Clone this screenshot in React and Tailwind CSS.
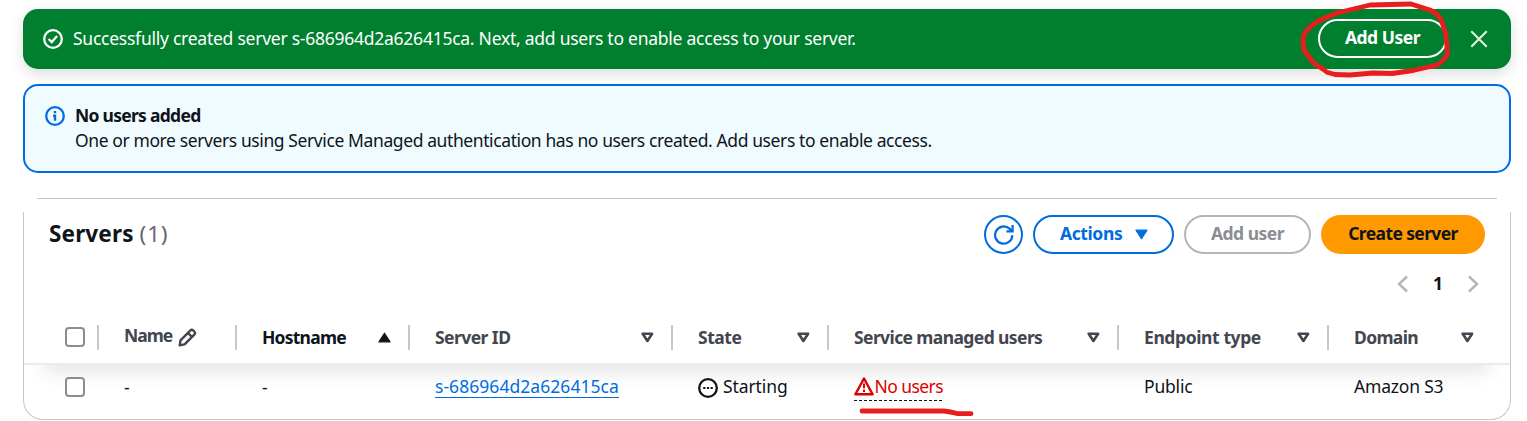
import React from "react";

const FilledCaret = ({ className, up }) => (
  <svg viewBox="0 0 13 11" className={`h-[11px] w-[13px] shrink-0 ${className}`}>
    <path d={up ? "M6.5 1.2 12 9.8H1z" : "M6.5 9.8 12 1.2H1z"} fill="currentColor" stroke="currentColor" strokeWidth="1.2" strokeLinejoin="round" />
  </svg>
);

const HollowCaret = () => (
  <svg viewBox="0 0 13 11" className="h-[11px] w-[13px] shrink-0 text-[#424650]">
    <path d="M1.7 1.7h9.4L6.4 9z" fill="none" stroke="currentColor" strokeWidth="2.6" strokeLinejoin="round" />
  </svg>
);

const Checkbox = () => <span className="block h-5 w-5 shrink-0 rounded-[4px] border-2 border-[#8c8c94] bg-white" />;

const Chevron = ({ right }) => (
  <svg viewBox="0 0 12 18" className="mt-px h-[18px] w-3 shrink-0">
    <path d={right ? "M2 1.5 10 9l-8 7.5" : "M10 1.5 2 9l8 7.5"} fill="none" stroke="#b4b4bb" strokeWidth="2.4" />
  </svg>
);

function HeadCell({ label, spacing, sort, last }) {
  return (
    <div className={`flex h-[25px] items-center justify-between border-[#c6c6cd] pl-[25px] ${last ? "pr-[36px]" : "border-r-2 pr-[17px]"}`}>
      <span className={`font-bold ${spacing} ${sort ? "text-[#0f141a]" : "text-[#424650]"}`}>{label}</span>
      {sort ? <FilledCaret up className="text-[#0f141a]" /> : <HollowCaret />}
    </div>
  );
}

const COLS = "grid grid-cols-[75px_138px_173px_263px_156px_290px_210px_181px]";

export default function App() {
  return (
    <div className="relative h-[421px] w-[1527px] overflow-hidden bg-white pl-[23px] pt-[9px] font-['Noto_Sans',sans-serif] text-[17.5px] leading-[25px] whitespace-nowrap text-[#0f141a]">
      <div className="flex h-[60px] w-[1488px] items-center rounded-[15px] bg-[#00802f] pl-5 pr-[23px] text-white shadow-[0_5px_13px_1px_rgba(0,7,22,0.12)]">
        <svg viewBox="0 0 20 20" className="h-5 w-5 shrink-0" fill="none" stroke="currentColor" strokeWidth="2.3">
          <circle cx="10" cy="10" r="8.8" />
          <path d="m5.6 10 3.1 3.1 5.4-6" />
        </svg>
        <span className="ml-[10px] pb-px tracking-[-0.25px]">Successfully created server s-686964d2a626415ca. Next, add users to enable access to your server.</span>
        <button className="mb-[2px] ml-auto h-[39px] w-[129px] rounded-full border-2 border-white pb-[2px] font-bold leading-[33px] tracking-[-0.5px]">Add User</button>
        <svg viewBox="0 0 18 18" className="ml-[23px] h-[18px] w-[18px] shrink-0" fill="none" stroke="#e0f0e5" strokeWidth="2.1">
          <path d="m1.3 1.3 15.4 15.4M16.7 1.3 1.3 16.7" />
        </svg>
      </div>

      <div className="relative mt-[15px] flex h-[89px] w-[1488px] items-start rounded-[15px] border-2 border-[#006ce0] bg-[#f0fbff] pl-5 pt-[17px]">
        <svg viewBox="0 0 20 20" className="mt-[3px] h-5 w-5 shrink-0 text-[#006ce0]" fill="none" stroke="currentColor" strokeWidth="2.3">
          <circle cx="10" cy="10" r="8.8" />
          <path d="M10 5v2.3M8 9.6h2.2M10 8.6v6.2" strokeWidth="2.4" />
        </svg>
        <div className="ml-[10px]">
          <div className="font-bold tracking-[-0.72px]">No users added</div>
          <div className="tracking-[-0.4px]">One or more servers using Service Managed authentication has no users created. Add users to enable access.</div>
        </div>
      </div>

      <div className="mt-[25px] w-[1488px]">
        <div className="mx-[14px] h-px bg-[#c6c6cd]" />
        <div className="mt-[13px] h-[208px] overflow-hidden rounded-b-[20px] border-x border-b border-[#c6c6cd]">
          <div className="flex h-[42px] items-center pl-[25px] pr-[25px] pt-[3px]">
            <h1 className="pb-px text-[22.5px] font-bold leading-[30px] tracking-[0.15px]">
              Servers <span className="font-normal tracking-[0.8px] text-[#656871]">(1)</span>
            </h1>
            <div className="ml-auto flex gap-[10px] font-bold">
              <button className="flex h-[39px] w-[39px] items-center justify-center rounded-full border-2 border-[#006ce0] text-[#006ce0]">
                <svg viewBox="0 0 20 20" className="h-5 w-5" fill="none" stroke="currentColor" strokeWidth="2.3">
                  <path d="M18.3 10.2a8.6 8.6 0 1 1-2.8-6.5l2.4 2.4" />
                  <path d="M18.6 0v6.3h-6.2" />
                </svg>
              </button>
              <button className="flex h-[39px] w-[141px] items-center rounded-full border-2 border-[#006ce0] pl-[25px] text-[#006ce0]">
                <span className="pb-[2px] tracking-[-0.4px]">Actions</span>
                <FilledCaret className="ml-[13px]" />
              </button>
              <button className="h-[39px] w-[127px] rounded-full border-2 border-[#b4b4bb] pb-[2px] tracking-[-0.5px] text-[#8c8c94]">Add user</button>
              <button className="h-[39px] w-[164px] rounded-full bg-[#ff9900] pb-[2px] tracking-[-0.62px]">Create server</button>
            </div>
          </div>
          <div className="flex h-[58px] items-center justify-end pr-[31px]">
            <Chevron />
            <span className="w-[58px] text-center font-bold">1</span>
            <Chevron right />
          </div>

          <div className={`${COLS} h-[51px] items-center pb-px`}>
            <div className="flex h-[25px] items-center border-r-2 border-[#c6c6cd] pl-[41px]">
              <Checkbox />
            </div>
            <div className="flex h-[25px] items-center border-r-2 border-[#c6c6cd] pl-[25px] text-[#424650]">
              <span className="pb-[3px] font-bold tracking-[-1px]">Name</span>
              <svg viewBox="0 0 19 19" className="ml-[5.5px] h-[19px] w-[19px]" fill="none" stroke="currentColor" strokeWidth="2.4" strokeLinejoin="round">
                <path d="M1.7 17.2 2.5 12.4 12.2 2.6a2.3 2.3 0 0 1 3.2 0l.9.9a2.3 2.3 0 0 1 0 3.2L6.6 16.4zM10 5l4.1 4.1" />
              </svg>
            </div>
            <HeadCell label="Hostname" spacing="tracking-[-0.78px]" sort />
            <HeadCell label="Server ID" spacing="tracking-[-0.55px]" />
            <HeadCell label="State" spacing="tracking-[-0.45px]" />
            <HeadCell label="Service managed users" spacing="tracking-[-0.6px]" />
            <HeadCell label="Endpoint type" spacing="tracking-[-0.4px]" />
            <HeadCell label="Domain" spacing="tracking-[-0.65px]" last />
          </div>

          <div className="h-[2px] bg-[#ebebee]" />
          <div className="relative h-[54px]">
            <div className="absolute inset-x-0 top-0 h-8 overflow-hidden">
              <div className="mx-[22px] -mt-[20px] h-5 shadow-[0_5px_20px_1px_rgba(0,7,22,0.12)]" />
            </div>
            <div className={`${COLS} relative h-[44px] items-center`}>
              <div className="pl-[41px]"><Checkbox /></div>
              <div className="pl-[25px]">-</div>
              <div className="pl-[25px]">-</div>
              <div className="pb-px pl-[25px]">
                <a className="inline-block border-b border-[#006ce0] leading-[22px] tracking-[0.05px] text-[#006ce0]">s-686964d2a626415ca</a>
              </div>
              <div className="flex items-center pl-[25px]">
                <svg viewBox="0 0 20 20" className="mr-[5px] mt-px h-5 w-5" fill="none" stroke="currentColor" strokeWidth="2.3">
                  <circle cx="10" cy="10" r="8.8" />
                  <path d="M5.2 10h2.2M8.9 10h2.2M12.6 10h2.2" strokeWidth="2.2" />
                </svg>
                <span className="pb-px tracking-[-0.1px]">Starting</span>
              </div>
              <div className="pl-[25px]">
                <span className="mt-[3px] inline-flex h-[28px] flex-col">
                  <span className="flex h-[25px] items-center text-[#db0000]">
                    <svg viewBox="0 0 20 19" className="mb-px h-[19px] w-5" fill="none" stroke="currentColor" strokeWidth="2.4" strokeLinejoin="round">
                      <path d="M10 1.5 18.6 17.3H1.4z" />
                      <path d="M10 6.4v4.8M10 12.6v2.4" strokeWidth="2" />
                    </svg>
                    <span className="ml-[0.5px] pb-px tracking-[-0.57px]">No users</span>
                  </span>
                  <svg viewBox="0 0 89 1" className="h-px w-[89px]">
                    <path d="M0 .5h89" stroke="#0f141a" strokeDasharray="3 2" />
                  </svg>
                </span>
              </div>
              <div className="pb-px pl-[25px] tracking-[-0.2px]">Public</div>
              <div className="pb-px pl-[25px] tracking-[-0.2px]">Amazon S3</div>
            </div>
          </div>
        </div>
      </div>

      <svg viewBox="0 0 1527 421" className="pointer-events-none absolute left-0 top-0 h-[421px] w-[1527px]" fill="none" stroke="#e81e1e" strokeWidth="4.8" strokeLinecap="round" strokeLinejoin="round">
        <path d="M1325 70.5 1313 62.5 1304 50 1303 38Q1304 30 1318 21L1337 13 1370 5 1411 4 1430 10Q1439 14 1442 22L1446 35 1447.5 54Q1444 61 1437 65L1413 70.5 1392 73.5 1373 73 1350 75 1335 74.5 1327 72.2" />
        <path d="M862 411h82q6 .5 14 2.7h13" />
      </svg>
    </div>
  );
}
